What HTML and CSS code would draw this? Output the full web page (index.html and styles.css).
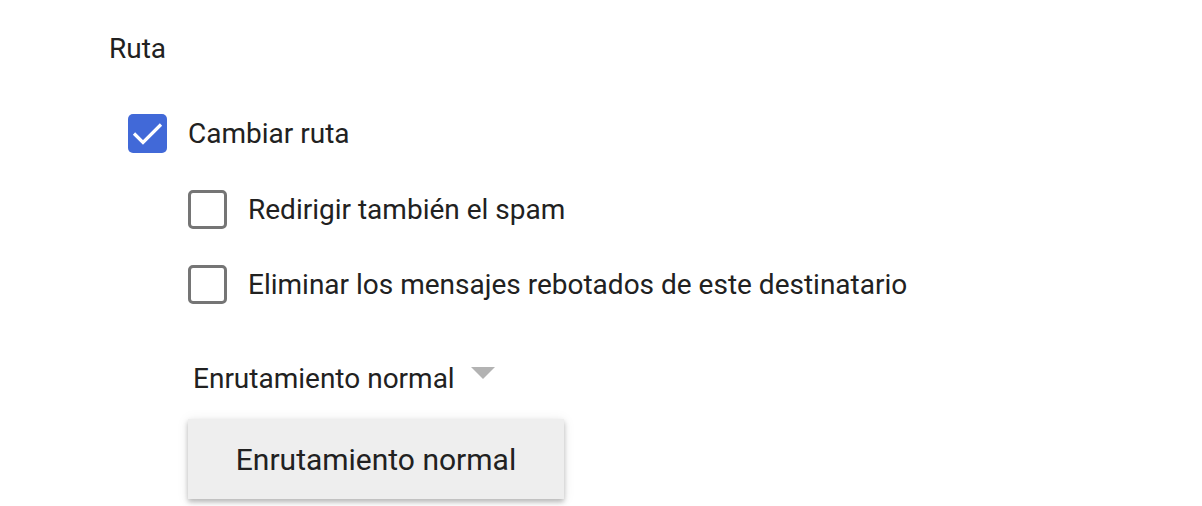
FILE: index.html
```html
<!DOCTYPE html>
<html lang="es">
<head>
<meta charset="utf-8">
<link rel="stylesheet" href="styles.css">
</head>
<body>
<div class="page">
  <div class="section-title">Ruta</div>
  <div class="options">
    <label class="row">
      <span class="box checked">
        <svg viewBox="0 0 39 39" width="39" height="39"><path d="M6 19.5 L15 28.5 L33 10.5" fill="none" stroke="#fff" stroke-width="3.2"/></svg>
      </span>
      <span class="label">Cambiar ruta</span>
    </label>
    <div class="sub">
      <label class="row">
        <span class="box"></span>
        <span class="label">Redirigir también el spam</span>
      </label>
      <label class="row">
        <span class="box"></span>
        <span class="label">Eliminar los mensajes rebotados de este destinatario</span>
      </label>
      <div class="select-wrap">
        <div class="select">
          <span class="select-text">Enrutamiento normal</span>
          <span class="caret"></span>
        </div>
        <div class="menu">
          <div class="menu-item">Enrutamiento normal</div>
        </div>
      </div>
    </div>
  </div>
</div>
</body>
</html>
```
FILE: styles.css
```css
* { box-sizing: border-box; }
html, body { margin: 0; padding: 0; background: #fff; }
body {
  font-family: Roboto, "Liberation Sans", sans-serif;
  color: #212121;
  width: 1202px;
  height: 506px;
  overflow: hidden;
}
.page {
  padding: 32px 0 0 109px;
}
.section-title {
  font-size: 28px;
  line-height: 34px;
}
.options {
  margin-top: 48px;
  padding-left: 19px;
}
.row {
  display: flex;
  align-items: center;
  height: 39px;
}
.box {
  width: 39px;
  height: 39px;
  border: 3.5px solid #757575;
  border-radius: 5px;
  flex: none;
}
.box.checked {
  border: none;
  background: #4169d8;
  display: flex;
}
.label {
  font-size: 28px;
  margin-left: 21px;
}
.sub {
  padding-left: 60px;
  margin-top: 37px;
  display: flex;
  flex-direction: column;
  gap: 36px;
}
.select-wrap {
  margin-top: 22px;
  display: flex;
  flex-direction: column;
}
.select {
  display: flex;
  align-items: center;
  padding-left: 5px;
  height: 32px;
}
.select-text {
  font-size: 28px;
}
.caret {
  align-self: flex-start;
  margin-left: 16px;
  margin-top: 5px;
  width: 0;
  height: 0;
  border-left: 12px solid transparent;
  border-right: 12px solid transparent;
  border-top: 12px solid #b3b3b3;
}
.menu {
  margin-top: 25px;
  width: 376px;
  height: 80px;
  background: #eeeeee;
  box-shadow: 0 3px 5px rgba(0,0,0,0.25), 0 1px 12px rgba(0,0,0,0.08);
  display: flex;
  align-items: center;
  justify-content: center;
}
.menu-item {
  font-size: 30px;
}
```
